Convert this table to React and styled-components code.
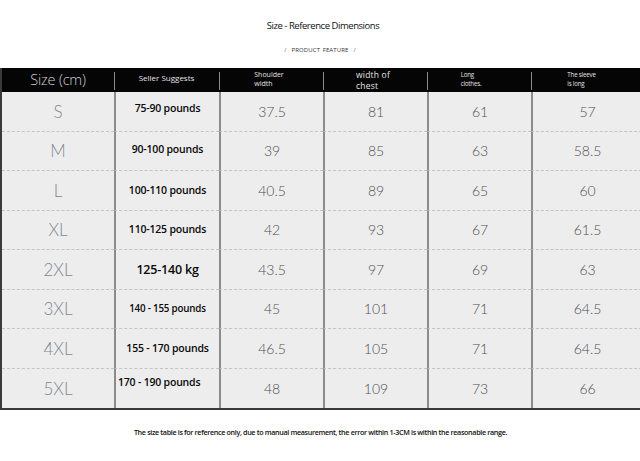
import React from "react";
import styled, { createGlobalStyle } from "styled-components";

const Global = createGlobalStyle`
  html, body { margin: 0; padding: 0; background: #fff; }
  body { width: 640px; height: 461px; overflow: hidden; font-family: "Open Sans", "Noto Sans", sans-serif; }
`;

const Page = styled.div`
  width: 640px;
  height: 461px;
  display: flex;
  flex-direction: column;
  background: #fff;
`;

const Title = styled.div`
  margin-top: 19px;
  height: 14px;
  text-align: center;
  font-family: "Open Sans", sans-serif;
  font-weight: 500;
  font-size: 9.5px;
  letter-spacing: -0.45px;
  color: #111;
  line-height: 14px;
  padding-left: 6px;
`;

const Sub = styled.div`
  margin-top: 12px;
  height: 10px;
  text-align: center;
  font-family: "Open Sans", sans-serif;
  font-size: 6px;
  letter-spacing: 0.1px;
  color: #333;
  line-height: 10px;
  word-spacing: 1px;
`;

const Slash = styled.span`
  color: #777;
  margin: 0 5px;
`;

const Table = styled.div`
  margin-top: 13px;
  display: grid;
  grid-template-columns: 112px 105px 104px 104px 104px 111px;
  grid-template-rows: 24px repeat(8, 39.5px);
  border-left: 2px solid #3a3a3a;
  border-bottom: 2px solid #3a3a3a;
  width: 638px;
`;

const Head = styled.div`
  background: #050505;
  display: flex;
  align-items: center;
  justify-content: center;
  position: relative;
  color: ${(p) => p.$color || "#e4e4e4"};
  font-family: "Open Sans", sans-serif;
  font-weight: ${(p) => p.$weight || 400};
  font-size: ${(p) => p.$size || 7}px;
  line-height: ${(p) => p.$lh || 9}px;
  padding-bottom: ${(p) => p.$up || 0}px;
  letter-spacing: ${(p) => p.$ls || 0}px;
  &::before {
    content: "";
    display: ${(p) => (p.$first ? "none" : "block")};
    position: absolute;
    left: 0;
    top: 4px;
    bottom: 2px;
    width: 1px;
    background: #8a8a8a;
  }
`;

const HeadText = styled.div`
  text-align: left;
  margin-left: ${(p) => p.$shift || 0}px;
`;

const Cell = styled.div`
  background: #ededee;
  display: flex;
  align-items: center;
  justify-content: ${(p) => (p.$left ? "flex-start" : "center")};
  padding-left: ${(p) => (p.$left ? 2 : 0)}px;
  padding-bottom: ${(p) => p.$up || 0}px;
  box-sizing: border-box;
  border-left: ${(p) => (p.$first ? "none" : "2px solid #8c8c8c")};
  border-bottom: ${(p) => (p.$last ? "none" : "1px dashed #c4c4c4")};
`;

const SizeText = styled.span`
  font-family: "Lato", "DejaVu Sans", sans-serif;
  font-weight: 300;
  font-size: 17px;
  color: #7f8892;
`;

const Seller = styled.span`
  font-family: "Open Sans", sans-serif;
  font-weight: 600;
  font-size: ${(p) => p.$size || 10.5}px;
  color: #0a0a0a;
  letter-spacing: -0.2px;
`;

const Num = styled.span`
  font-family: "Lato", "DejaVu Sans", sans-serif;
  font-weight: 300;
  font-size: 14px;
  color: #505050;
`;

const Footer = styled.div`
  margin-top: 17px;
  text-align: center;
  font-family: "Open Sans", sans-serif;
  font-weight: 600;
  font-size: 7.2px;
  letter-spacing: -0.35px;
  color: #111;
  padding-left: 1px;
`;

const rows = [
  { s: "S", seller: "75-90 pounds", up: 6, v: ["37.5", "81", "61", "57"] },
  { s: "M", seller: "90-100 pounds", up: 4, v: ["39", "85", "63", "58.5"] },
  { s: "L", seller: "100-110 pounds", up: 1, v: ["40.5", "89", "65", "60"] },
  { s: "XL", seller: "110-125 pounds", up: 1, v: ["42", "93", "67", "61.5"] },
  { s: "2XL", seller: "125-140 kg", up: 0, size: 12.5, v: ["43.5", "97", "69", "63"] },
  { s: "3XL", seller: "140 - 155 pounds", up: 0, size: 9.8, v: ["45", "101", "71", "64.5"] },
  { s: "4XL", seller: "155 - 170 pounds", up: 0, v: ["46.5", "105", "71", "64.5"] },
  { s: "5XL", seller: "170 - 190 pounds", up: 12, left: true, v: ["48", "109", "73", "66"] },
];

export default function App() {
  return (
    <Page>
      <Global />
      <Title>Size - Reference Dimensions</Title>
      <Sub>
        <Slash>/</Slash>PRODUCT FEATURE<Slash>/</Slash>
      </Sub>
      <Table>
        <Head $first $size={14.5} $lh={16} $ls={-0.2} $weight={300} $color="#d2d2d2">
          <HeadText>Size (cm)</HeadText>
        </Head>
        <Head $size={8} $up={5}>
          <HeadText>Seller Suggests</HeadText>
        </Head>
        <Head $size={7} $lh={9} $up={2}>
          <HeadText $shift={-4}>Shoulder<br />width</HeadText>
        </Head>
        <Head $size={8.5} $lh={11} $ls={0.2}>
          <HeadText $shift={-4}>width of<br />chest</HeadText>
        </Head>
        <Head $size={6.2} $lh={9} $up={3} $ls={-0.2}>
          <HeadText $shift={-16}>Long<br />clothes.</HeadText>
        </Head>
        <Head $size={6.2} $lh={9} $up={3} $ls={-0.2}>
          <HeadText $shift={-10}>The sleeve<br />is long</HeadText>
        </Head>
        {rows.map((r, i) => (
          <React.Fragment key={r.s}>
            <Cell $first $last={i === rows.length - 1}>
              <SizeText>{r.s}</SizeText>
            </Cell>
            <Cell $last={i === rows.length - 1} $up={r.up} $left={r.left}>
              <Seller $size={r.size}>{r.seller}</Seller>
            </Cell>
            {r.v.map((n, j) => (
              <Cell key={j} $last={i === rows.length - 1}>
                <Num>{n}</Num>
              </Cell>
            ))}
          </React.Fragment>
        ))}
      </Table>
      <Footer>
        The size table is for reference only, due to manual measurement, the error within 1-3CM is within the reasonable range.
      </Footer>
    </Page>
  );
}
